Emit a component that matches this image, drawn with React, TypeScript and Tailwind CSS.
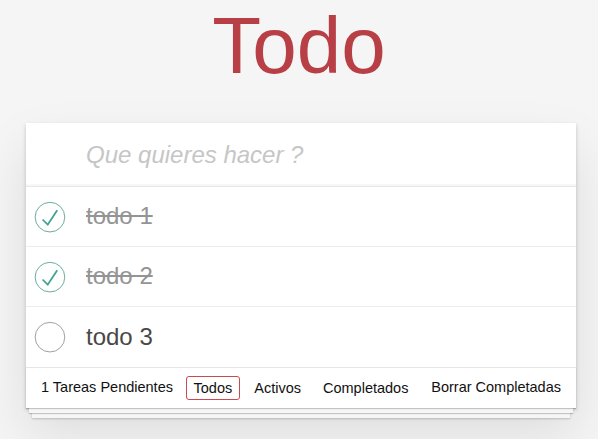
import React, { useState } from "react";

type Todo = { id: number; title: string; completed: boolean };

const Toggle: React.FC<{ checked: boolean }> = ({ checked }) => (
  <svg width="40" height="40" viewBox="-10 -18 100 135" className="shrink-0">
    <circle
      cx="50"
      cy="50"
      r="50"
      fill="none"
      stroke={checked ? "#59A193" : "#949494"}
      strokeWidth="3"
    />
    {checked && <path fill="#3EA390" d="M72 25L42 71 27 56l-4 4 20 20 34-52z" />}
  </svg>
);

const App: React.FC = () => {
  const [todos] = useState<Todo[]>([
    { id: 1, title: "todo 1", completed: true },
    { id: 2, title: "todo 2", completed: true },
    { id: 3, title: "todo 3", completed: false },
  ]);
  const pending = todos.filter((t) => !t.completed).length;

  return (
    <div className="min-h-screen bg-[#f5f5f5] font-['Liberation_Sans',Arial,sans-serif] text-[#111]">
      <h1 className="pt-[6px] text-center text-[80px] font-normal leading-none text-[#b83f45]">
        Todo
      </h1>

      <div className="ml-[26px] mt-[37px] w-[550px] bg-white shadow-[0_2px_4px_0_rgba(0,0,0,0.2),0_25px_50px_0_rgba(0,0,0,0.1)]">
        <input
          className="block h-[63px] w-full pl-[60px] pr-4 text-[24px] leading-[1.4] text-[#4d4d4d] outline-none shadow-[inset_0_-2px_1px_rgba(0,0,0,0.03)] placeholder:italic placeholder:text-[#c6c6c6]"
          placeholder="Que quieres hacer ?"
        />

        <ul className="border-t border-[#e6e6e6]">
          {todos.map((todo, i) => (
            <li
              key={todo.id}
              className={`flex h-[60px] items-center ${i < todos.length - 1 ? "border-b border-[#ededed]" : ""}`}
            >
              <div className="flex w-[60px] items-center pl-[1px]">
                <Toggle checked={todo.completed} />
              </div>
              <span
                className={`text-[24px] leading-[1.2] ${todo.completed ? "text-[#949494] line-through" : "text-[#484848]"}`}
              >
                {todo.title}
              </span>
            </li>
          ))}
        </ul>

        <footer className="grid h-[41px] grid-cols-[1fr_auto_1fr] items-center border-t border-[#e6e6e6] px-[15px] text-[14.5px] shadow-[0_1px_1px_rgba(0,0,0,0.2),0_8px_0_-3px_#f6f6f6,0_9px_1px_-3px_rgba(0,0,0,0.2),0_16px_0_-6px_#f6f6f6,0_17px_2px_-6px_rgba(0,0,0,0.2)]">
          <span>{pending} Tareas Pendientes</span>
          <ul className="flex items-center">
            <li>
              <a className="m-[3px] block rounded-[3px] border border-[#c9494e] px-[7px] py-[3px] leading-[16px]">
                Todos
              </a>
            </li>
            <li>
              <a className="m-[3px] block rounded-[3px] border border-transparent px-[7px] py-[3px] leading-[16px]">
                Activos
              </a>
            </li>
            <li>
              <a className="m-[3px] block rounded-[3px] border border-transparent px-[7px] py-[3px] leading-[16px]">
                Completados
              </a>
            </li>
          </ul>
          <button className="justify-self-end">Borrar Completadas</button>
        </footer>
      </div>
    </div>
  );
};

export default App;
